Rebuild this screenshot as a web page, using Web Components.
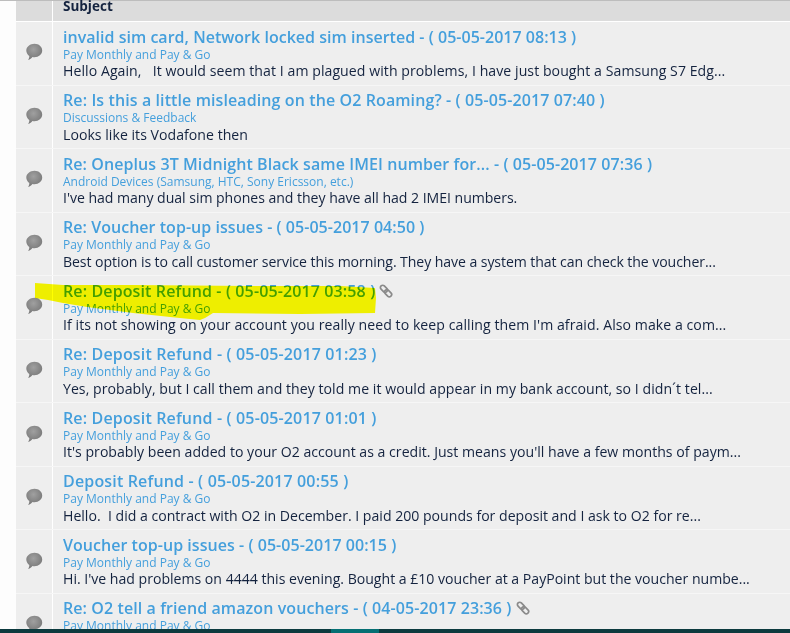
<!DOCTYPE html>
<html><head><meta charset="utf-8"><style>
html,body{margin:0;padding:0;width:790px;height:633px;overflow:hidden;background:#fff}
</style></head><body>
<topic-list>
<topic-row tl=".02" xl=".06" title="invalid sim card, Network locked sim inserted - ( 05-05-2017 08:13 )" forum="Pay Monthly and Pay &amp; Go" text="Hello Again,&nbsp;&nbsp; It would seem that I am plagued with problems, I have just bought a Samsung S7 Edg..."></topic-row>
<topic-row tl=".1" xl=".03" title="Re: Is this a little misleading on the O2 Roaming? - ( 05-05-2017 07:40 )" forum="Discussions &amp; Feedback" text="Looks like its Vodafone then"></topic-row>
<topic-row tl=".08" xl="-.04" title="Re: Oneplus 3T Midnight Black same IMEI number for... - ( 05-05-2017 07:36 )" forum="Android Devices (Samsung, HTC, Sony Ericsson, etc.)" text="I've had many dual sim phones and they have all had 2 IMEI numbers."></topic-row>
<topic-row tl=".04" xl="-.08" title="Re: Voucher top-up issues - ( 05-05-2017 04:50 )" forum="Pay Monthly and Pay &amp; Go" text="Best option is to call customer service this morning. They have a system that can check the voucher..."></topic-row>
<topic-row clip tl=".12" xl=".06" title="Re: Deposit Refund - ( 05-05-2017 03:58 )" forum="Pay Monthly and Pay &amp; Go" text="If its not showing on your account you really need to keep calling them I'm afraid. Also make a com..."></topic-row>
<topic-row tl=".15" xl=".04" title="Re: Deposit Refund - ( 05-05-2017 01:23 )" forum="Pay Monthly and Pay &amp; Go" text="Yes, probably, but I call them and they told me it would appear in my bank account, so I didn´t tel..."></topic-row>
<topic-row tl=".15" xl=".01" title="Re: Deposit Refund - ( 05-05-2017 01:01 )" forum="Pay Monthly and Pay &amp; Go" text="It's probably been added to your O2 account as a credit. Just means you'll have a few months of paym..."></topic-row>
<topic-row tl=".16" xl="0" title="Deposit Refund - ( 05-05-2017 00:55 )" forum="Pay Monthly and Pay &amp; Go" text="Hello.&nbsp; I did a contract with O2 in December. I paid 200 pounds for deposit and I ask to O2 for re..."></topic-row>
<topic-row tl=".04" xl="-.01" title="Voucher top-up issues - ( 05-05-2017 00:15 )" forum="Pay Monthly and Pay &amp; Go" text="Hi. I've had problems on 4444 this evening. Bought a £10 voucher at a PayPoint but the voucher numbe..."></topic-row>
<topic-row clip tl=".09" xl="0" title="Re: O2 tell a friend amazon vouchers - ( 04-05-2017 23:36 )" forum="Pay Monthly and Pay &amp; Go" text=""></topic-row>
</topic-list>
<script>
class TopicRow extends HTMLElement{
  connectedCallback(){
    const s=this.attachShadow({mode:'open'});
    const clip=this.hasAttribute('clip');
    const tl=this.getAttribute('tl')||0, xl=this.getAttribute('xl')||0;
    s.innerHTML=`<style>
    :host{display:grid;grid-template-columns:36px 1px 1fr;height:63.55px;border-bottom:1px solid #f6f6f6;background:#eeeeee;box-sizing:border-box}
    .ic{display:flex;align-items:center;justify-content:center}
    .ic svg{display:block;margin-bottom:2px}
    .sep{background:#fff}
    .c{padding:4.5px 0 0 10px;white-space:nowrap;overflow:hidden;min-width:0}
    .t{font:600 16px/20px "Open Sans","Noto Sans",sans-serif;color:#449fdc;display:flex;align-items:center;gap:4px;height:20px;letter-spacing:${tl}px}
    .t svg{display:block}
    .f{font:400 12px/14px "Open Sans","Noto Sans",sans-serif;color:#449fdc;height:14px;margin-top:1px}
    .x{font:400 14.1px/18px "Open Sans","Noto Sans",sans-serif;color:#14233f;height:18px;margin-top:.5px;letter-spacing:${xl}px}
    </style>
    <div class="ic"><svg width="18" height="18" viewBox="0 0 18 18"><defs><radialGradient id="g" cx=".45" cy=".35" r=".7"><stop offset="0" stop-color="#a0a0a0"/><stop offset="1" stop-color="#747474"/></radialGradient></defs><path fill="url(#g)" d="M9.500.8c4.200 0 7.700 2.900 7.700 6.700s-3.500 6.700-7.700 6.700c-.7 0-1.400-.1-2.100-.2-.9 1.400-2.500 2.500-4.200 2.900.7-1 1.100-2.200 1.100-3.800C2.500 11.700 1.300 9.700 1.300 7.500c0-3.800 4-6.700 8.200-6.700z"/></svg></div>
    <div class="sep"></div>
    <div class="c">
      <div class="t"><span>${this.getAttribute('title')}</span>${clip?`<svg width="14" height="14" viewBox="0 0 14 14" fill="none" stroke="#8a8a8a" stroke-width="1.700"><rect x=".9" y="2.500" width="8" height="4.600" rx="2.300" transform="rotate(45 4.900 4.800)"/><rect x="5.100" y="6.900" width="8" height="4.600" rx="2.300" transform="rotate(45 9.100 9.200)"/></svg>`:''}</div>
      <div class="f">${this.getAttribute('forum')}</div>
      <div class="x">${this.getAttribute('text')}</div>
    </div>`;
  }
}
class TopicList extends HTMLElement{
  connectedCallback(){
    const s=this.attachShadow({mode:'open'});
    s.innerHTML=`<style>
    :host{display:block;position:relative;width:790px;height:633px;overflow:hidden;background:#fdfdfd}
    .top{height:1px;background:#bdbdbd}
    .wrap{margin-left:16px}
    .h{display:grid;grid-template-columns:36px 1px 1fr;height:20px;background:#dcdcdc;border-bottom:1px solid #fff}
    .h i{background:#fff}
    .h b{font:700 13.500px/11px "Open Sans","Noto Sans",sans-serif;color:#14233f;padding-left:10px}
    .foot{position:absolute;left:0;right:0;top:629px;height:4px;background:#0c3a3e}
    .foot i{position:absolute;left:331px;width:48px;top:0;bottom:0;background:#056f73}
    svg.hl{position:absolute;left:0;top:0;mix-blend-mode:multiply;pointer-events:none}
    </style>
    <div class="top"></div>
    <div class="wrap">
      <div class="h"><span></span><i></i><b>Subject</b></div>
      <slot></slot>
    </div>
    <svg class="hl" width="790" height="633"><path fill="#ffff00" d="M35 283 63 285 133 285 250 286 340 286 375 288 376 298 375 313 300 314 213 313 205 318 200 320 170 317 133 313 87 307 63 303 48 300 35 298Z"/></svg>
    <div class="foot"><i></i></div>`;
  }
}
customElements.define('topic-row',TopicRow);
customElements.define('topic-list',TopicList);
</script>
</body></html>
